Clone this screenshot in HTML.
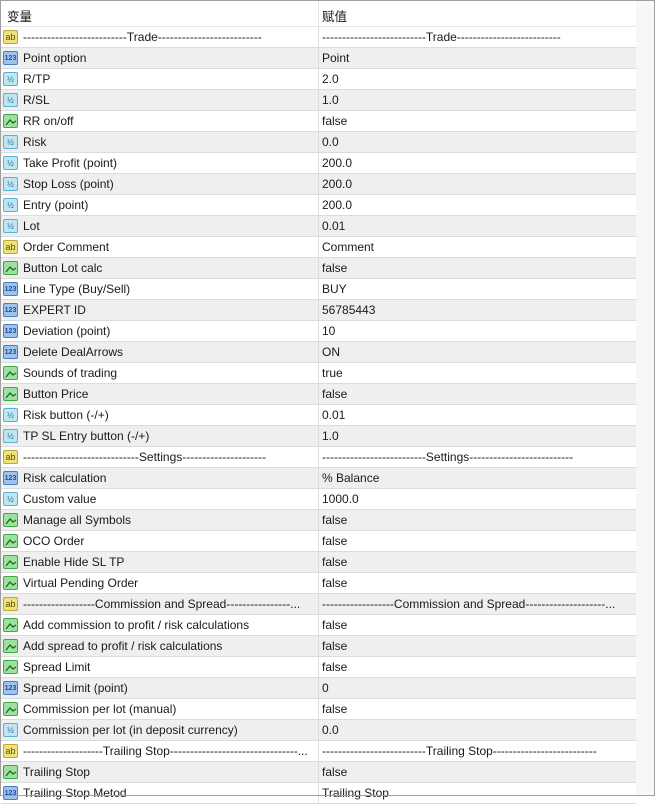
<!DOCTYPE html>
<html><head><meta charset="utf-8"><style>
*{margin:0;padding:0;box-sizing:border-box}
body{width:655px;height:796px;overflow:hidden;background:#fff;font-family:"Liberation Sans","Noto Sans CJK SC",sans-serif;font-size:12px;color:#1a1a1a;position:relative}
.frame{position:absolute;left:0;top:0;width:655px;height:796px;border:1px solid #a0a0a0;pointer-events:none}
.hd{position:absolute;left:1px;top:1px;width:635px;height:26px;background:#fff;border-bottom:1px solid #e5e5e5}
.hd span{position:absolute;top:5px;font-size:12.5px}
.rows{position:absolute;left:1px;top:27px;width:635px}
.r{height:21px;position:relative;border-bottom:1px solid #dcdcdc;white-space:nowrap}
.r:nth-child(even){background:#efefef}
.r .n{position:absolute;left:22px;top:3px}
.r .v{position:absolute;left:321px;top:3px}
.r:before{content:"";position:absolute;left:317px;top:0;height:21px;border-left:1px solid #dcdcdc}
.i{position:absolute;left:2px;top:3px;width:15px;height:14px;border-radius:2px;font-size:7px;font-weight:bold;line-height:13px;text-align:center;font-family:"Liberation Sans",sans-serif;font-style:normal}
.ab{background:#efe27a;border:1px solid #b9a83a;color:#5a4d00;font-size:9px;font-weight:normal}
.n3{background:#9ec3ec;border:1px solid #4a7fc0;color:#1f4f9a}
.h{background:#bfe6f2;border:1px solid #5ab0cf;color:#1e6f96;font-weight:normal;font-size:8px}
.b{background:#9fe0a0;border:1px solid #3fa84a}
.b svg{position:absolute;left:1px;top:1px}
.sb{position:absolute;left:636px;top:1px;width:18px;height:794px;background:#f7f7f7}
.th{position:absolute;left:646px;top:18px;width:3px;height:84px;background:#8a8a8a;border-radius:1px}
</style></head><body>
<div class="hd"><span style="left:6px">变量</span><span style="left:321px">赋值</span><div style="position:absolute;left:317px;top:0;height:26px;border-left:1px solid #e5e5e5"></div></div>
<div class="rows">
<div class="r"><i class="i ab">ab</i><span class="n">--------------------------Trade--------------------------</span><span class="v">--------------------------Trade--------------------------</span></div>
<div class="r"><i class="i n3">123</i><span class="n">Point option</span><span class="v">Point</span></div>
<div class="r"><i class="i h">½</i><span class="n">R/TP</span><span class="v">2.0</span></div>
<div class="r"><i class="i h">½</i><span class="n">R/SL</span><span class="v">1.0</span></div>
<div class="r"><i class="i b"><svg width="12" height="11"><path d="M1 9 L5 4 L8 7 L11 5" stroke="#1a6a20" fill="none" stroke-width="1.3"/></svg></i><span class="n">RR on/off</span><span class="v">false</span></div>
<div class="r"><i class="i h">½</i><span class="n">Risk</span><span class="v">0.0</span></div>
<div class="r"><i class="i h">½</i><span class="n">Take Profit (point)</span><span class="v">200.0</span></div>
<div class="r"><i class="i h">½</i><span class="n">Stop Loss (point)</span><span class="v">200.0</span></div>
<div class="r"><i class="i h">½</i><span class="n">Entry (point)</span><span class="v">200.0</span></div>
<div class="r"><i class="i h">½</i><span class="n">Lot</span><span class="v">0.01</span></div>
<div class="r"><i class="i ab">ab</i><span class="n">Order Comment</span><span class="v">Comment</span></div>
<div class="r"><i class="i b"><svg width="12" height="11"><path d="M1 9 L5 4 L8 7 L11 5" stroke="#1a6a20" fill="none" stroke-width="1.3"/></svg></i><span class="n">Button Lot calc</span><span class="v">false</span></div>
<div class="r"><i class="i n3">123</i><span class="n">Line Type (Buy/Sell)</span><span class="v">BUY</span></div>
<div class="r"><i class="i n3">123</i><span class="n">EXPERT ID</span><span class="v">56785443</span></div>
<div class="r"><i class="i n3">123</i><span class="n">Deviation (point)</span><span class="v">10</span></div>
<div class="r"><i class="i n3">123</i><span class="n">Delete DealArrows</span><span class="v">ON</span></div>
<div class="r"><i class="i b"><svg width="12" height="11"><path d="M1 9 L5 4 L8 7 L11 5" stroke="#1a6a20" fill="none" stroke-width="1.3"/></svg></i><span class="n">Sounds of trading</span><span class="v">true</span></div>
<div class="r"><i class="i b"><svg width="12" height="11"><path d="M1 9 L5 4 L8 7 L11 5" stroke="#1a6a20" fill="none" stroke-width="1.3"/></svg></i><span class="n">Button Price</span><span class="v">false</span></div>
<div class="r"><i class="i h">½</i><span class="n">Risk button (-/+)</span><span class="v">0.01</span></div>
<div class="r"><i class="i h">½</i><span class="n">TP SL Entry button (-/+)</span><span class="v">1.0</span></div>
<div class="r"><i class="i ab">ab</i><span class="n">-----------------------------Settings---------------------</span><span class="v">--------------------------Settings--------------------------</span></div>
<div class="r"><i class="i n3">123</i><span class="n">Risk calculation</span><span class="v">% Balance</span></div>
<div class="r"><i class="i h">½</i><span class="n">Custom value</span><span class="v">1000.0</span></div>
<div class="r"><i class="i b"><svg width="12" height="11"><path d="M1 9 L5 4 L8 7 L11 5" stroke="#1a6a20" fill="none" stroke-width="1.3"/></svg></i><span class="n">Manage all Symbols</span><span class="v">false</span></div>
<div class="r"><i class="i b"><svg width="12" height="11"><path d="M1 9 L5 4 L8 7 L11 5" stroke="#1a6a20" fill="none" stroke-width="1.3"/></svg></i><span class="n">OCO Order</span><span class="v">false</span></div>
<div class="r"><i class="i b"><svg width="12" height="11"><path d="M1 9 L5 4 L8 7 L11 5" stroke="#1a6a20" fill="none" stroke-width="1.3"/></svg></i><span class="n">Enable Hide SL TP</span><span class="v">false</span></div>
<div class="r"><i class="i b"><svg width="12" height="11"><path d="M1 9 L5 4 L8 7 L11 5" stroke="#1a6a20" fill="none" stroke-width="1.3"/></svg></i><span class="n">Virtual Pending Order</span><span class="v">false</span></div>
<div class="r"><i class="i ab">ab</i><span class="n">------------------Commission and Spread----------------...</span><span class="v">------------------Commission and Spread--------------------...</span></div>
<div class="r"><i class="i b"><svg width="12" height="11"><path d="M1 9 L5 4 L8 7 L11 5" stroke="#1a6a20" fill="none" stroke-width="1.3"/></svg></i><span class="n">Add commission to profit / risk calculations</span><span class="v">false</span></div>
<div class="r"><i class="i b"><svg width="12" height="11"><path d="M1 9 L5 4 L8 7 L11 5" stroke="#1a6a20" fill="none" stroke-width="1.3"/></svg></i><span class="n">Add spread to profit / risk calculations</span><span class="v">false</span></div>
<div class="r"><i class="i b"><svg width="12" height="11"><path d="M1 9 L5 4 L8 7 L11 5" stroke="#1a6a20" fill="none" stroke-width="1.3"/></svg></i><span class="n">Spread Limit</span><span class="v">false</span></div>
<div class="r"><i class="i n3">123</i><span class="n">Spread Limit (point)</span><span class="v">0</span></div>
<div class="r"><i class="i b"><svg width="12" height="11"><path d="M1 9 L5 4 L8 7 L11 5" stroke="#1a6a20" fill="none" stroke-width="1.3"/></svg></i><span class="n">Commission per lot (manual)</span><span class="v">false</span></div>
<div class="r"><i class="i h">½</i><span class="n">Commission per lot (in deposit currency)</span><span class="v">0.0</span></div>
<div class="r"><i class="i ab">ab</i><span class="n">--------------------Trailing Stop--------------------------------...</span><span class="v">--------------------------Trailing Stop--------------------------</span></div>
<div class="r"><i class="i b"><svg width="12" height="11"><path d="M1 9 L5 4 L8 7 L11 5" stroke="#1a6a20" fill="none" stroke-width="1.3"/></svg></i><span class="n">Trailing Stop</span><span class="v">false</span></div>
<div class="r"><i class="i n3">123</i><span class="n">Trailing Stop Metod</span><span class="v">Trailing Stop</span></div>
</div>
<div class="sb"><div class="th"></div></div>
<div class="frame"></div>
</body></html>
